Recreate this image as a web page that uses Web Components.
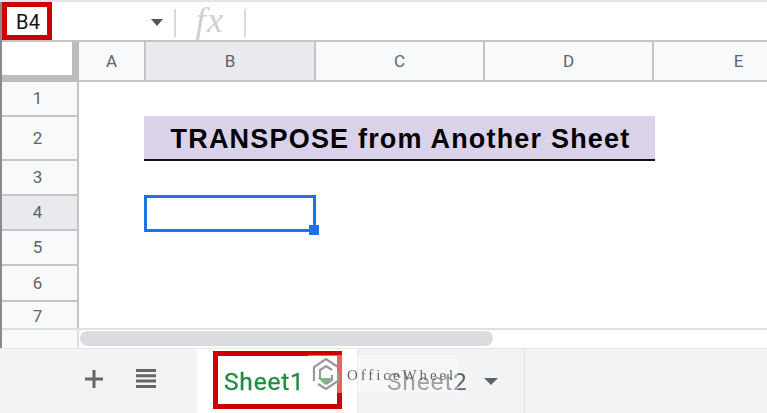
<!DOCTYPE html>
<html><head><meta charset="utf-8"><style>
html,body{margin:0;padding:0;background:#fff;overflow:hidden}
body{width:767px;height:413px;font-family:Roboto,"Liberation Sans",sans-serif}
</style></head><body>
<x-sheet-app>
  <x-formula-bar cell="B4"></x-formula-bar>
  <x-grid></x-grid>
  <x-tab-bar></x-tab-bar>
</x-sheet-app>
<script>
function def(name,html,setup){customElements.define(name,class extends HTMLElement{constructor(){super();this.attachShadow({mode:'open'}).innerHTML=html;}connectedCallback(){setup&&setup(this)}})}
def('x-sheet-app',`<style>:host{display:flex;flex-direction:column;width:767px;height:413px;overflow:hidden;border-top:2px solid #e4e4ea;box-sizing:border-box;position:relative;filter:blur(.45px)}
.edge{position:absolute;left:0;top:0;bottom:65px;width:1.5px;background:#8a8a8a}</style><slot></slot><div class="edge"></div>`);
def('x-formula-bar',`<style>:host{display:flex;align-items:center;flex:none;position:relative;background:#fff;border-bottom:2px solid #c4c4c4;height:38px}
.name{width:151px;box-sizing:border-box;padding-left:16px;font:20px/1 Roboto,sans-serif;color:#111;letter-spacing:.4px;padding-top:1px}
.red{position:absolute;left:2px;top:0;width:50px;height:38px;border:5px solid #cc0000;box-sizing:border-box}
.caret{width:0;height:0;border:6.5px solid transparent;border-top:7px solid #555;border-bottom:0;margin:3px 11px 0 0}
.sep{width:2px;height:28px;background:#dadada;margin-top:3px}
.fx{width:68px;text-align:center;font:italic 36px/1 "Liberation Serif",serif;color:#cfcfcf;letter-spacing:1.5px;margin-top:-3px}</style>
<div class="name">B4</div><div class="caret"></div><div class="sep"></div><div class="fx">fx</div><div class="sep"></div><div class="red"></div>`);
def('x-grid',`<style>:host{display:grid;flex:none;position:relative;background:#fff;
grid-template-columns:79px 67px 170px 169px 169px 169px;grid-template-rows:40px 35px 44px 35px 35px 35px 36px 26px}
.h{display:flex;align-items:center;justify-content:center;background:#f8f9fa;color:#5f6368;font:17px/1 Roboto,sans-serif;box-sizing:border-box}
.c{border-right:2px solid #c4c4c4;border-bottom:2px solid #c4c4c4}
.r{border-right:2px solid #c4c4c4;border-bottom:2px solid #c4c4c4;padding-right:2px}
.sel{background:#e8eaed}
.corner{background:#fff;border-right:7px solid #bdbdbd;border-bottom:7px solid #bdbdbd;box-sizing:border-box}
.title{grid-column:3 / 6;grid-row:3;margin:-1px 0 0 -2px;width:511px;height:45px;box-sizing:border-box;background:#d9d2e9;border-bottom:2px solid #111;display:flex;align-items:center;justify-content:center;font:bold 27px/1 "Liberation Sans",Arial,sans-serif;color:#000;letter-spacing:1.19px;white-space:nowrap;padding:3px 0 0 2px}
.cursor{grid-column:3;grid-row:5;position:relative;margin:-1px 0 0 -2px;width:172px;height:37px;border:3px solid #1a73e8;box-sizing:border-box;background:#fff}
.cursor i{position:absolute;right:-6px;bottom:-6px;width:10px;height:10px;background:#1a73e8}
</style>
<div class="corner"></div>
<div class="h c">A</div><div class="h c sel">B</div><div class="h c">C</div><div class="h c">D</div><div class="h" style="border-bottom:2px solid #c4c4c4">E</div>
<div class="h r" style="grid-row:2">1</div>
<div class="h r" style="grid-row:3">2</div>
<div class="h r" style="grid-row:4">3</div>
<div class="h r sel" style="grid-row:5">4</div>
<div class="h r" style="grid-row:6">5</div>
<div class="h r" style="grid-row:7">6</div>
<div class="h r" style="grid-row:8;border-bottom:0;padding-top:2px">7</div>
<div class="title">TRANSPOSE from Another Sheet</div>
<div class="cursor"><i></i></div>`);
def('x-tab-bar',`<style>:host{display:block;flex:none}
.scroll{height:20px;display:flex;align-items:center;border-top:2px solid #e0e0e0;box-sizing:border-box;background:#fff}
.gut{width:79px;height:100%;background:#f8f9fa;border-right:2px solid #e0e0e0;box-sizing:border-box}
.thumb{width:413px;height:15px;border-radius:8px;background:#dadce0;margin:-2px 0 0 1px}
.bar{height:65px;background:#f1f3f4;border-top:1px solid #e6e6e6;box-sizing:border-box;display:flex;align-items:center;position:relative}
.plus{margin:-5px 0 0 85px;width:18px;height:18px;flex:none}
.menu{margin:-5px 41px 0 33px;width:20px;height:19px;flex:none}
.tab{height:100%;display:flex;align-items:center;box-sizing:border-box;font:24.5px/1 Roboto,sans-serif;letter-spacing:.8px;padding-top:2px}
.active{width:160px;background:#fff;color:#1e8e3e;padding-left:27px;-webkit-text-stroke:.3px #1e8e3e}
.other{width:168px;color:#5f6368;padding-left:30px;border-right:1px solid #e3e3e3;box-shadow:inset 2px 0 2px -1px #e4e4e4}
.caret{width:0;height:0;border:7px solid transparent;border-top:7px solid #5f6368;border-bottom:0;margin-left:16px;margin-top:-2px}
.red{position:absolute;left:213px;top:2px;width:129px;height:58px;border:5px solid #cc0000;box-sizing:border-box}
.wm{position:absolute;left:308px;top:6px;width:150px;height:38px;background:rgba(255,255,255,.4);display:flex;align-items:center;gap:7px;color:#666;font:15px/1 "Liberation Serif",serif;letter-spacing:2.9px;white-space:nowrap;box-sizing:border-box;padding:0 0 0 4px}
.wm span{margin-top:2px}
</style>
<div class="scroll"><div class="gut"></div><div class="thumb"></div></div>
<div class="bar">
<svg class="plus" viewBox="0 0 18 18"><path d="M7.5 0h3v7.5H18v3h-7.5V18h-3v-7.5H0v-3h7.5z" fill="#666"/></svg>
<svg class="menu" viewBox="0 0 20 19"><path d="M0 0h20v3H0zM0 5.3h20v3H0zM0 10.6h20v3H0zM0 16h20v3H0z" fill="#666"/></svg>
<div class="tab active">Sheet1<span class="caret" style="margin-left:13px;border-top-color:#1e8e3e"></span></div>
<div class="tab other">Sheet2<span class="caret"></span></div>
<div class="red"></div>
<div class="wm"><svg width="28" height="36" viewBox="0 0 28 36" fill="none" stroke="#999" stroke-width="2.2"><path d="M2 25V11L14 3l12 8"/><path d="M26 16v9l-12 8-8-5"/><path d="M8 23v-9l6-4 6 4"/><path d="M20 19v5l-6 4"/></svg><span>OfficeWheel</span></div>
</div>`);
</script>
</body></html>
